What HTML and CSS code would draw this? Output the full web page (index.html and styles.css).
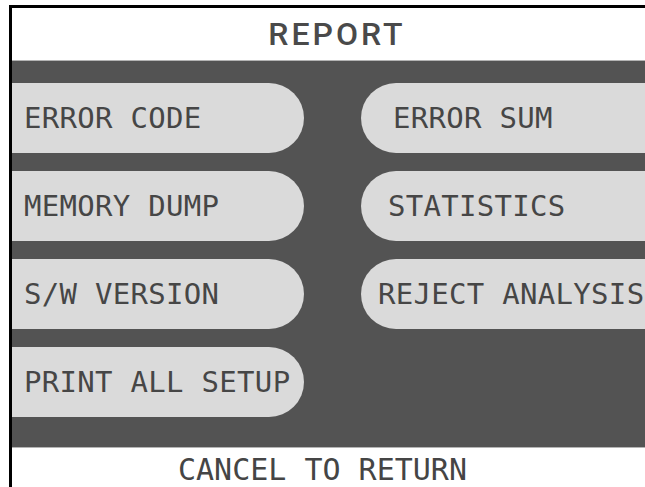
FILE: index.html
```html
<!DOCTYPE html>
<html lang="en">
<head>
  <meta charset="UTF-8">
  <meta name="viewport" content="width=device-width, initial-scale=1.0">
  <title>Report</title>
  <link rel="stylesheet" href="styles.css">
</head>
<body>

<div id="screen">
  <h1 class="titulo">REPORT</h1>

  <div class="painel">
    <div class="botao esq">ERROR CODE</div>
    <div class="botao dir recuo-grande">ERROR SUM</div>

    <div class="botao esq">MEMORY DUMP</div>
    <div class="botao dir recuo-medio">STATISTICS</div>

    <div class="botao esq">S/W VERSION</div>
    <div class="botao dir">REJECT ANALYSIS</div>

    <div class="botao esq">PRINT ALL SETUP</div>
  </div>

  <footer class="rodape">CANCEL TO RETURN</footer>
</div>

</body>
</html>
```

FILE: styles.css
```css
body {
    margin: 0;
    background-color: white;
    overflow: hidden;
}

#screen {
    margin-left: 9px;
    margin-top: 5px;
    border-left: 3px solid black;
    border-top: 3px solid black;
    height: 482px;
    overflow: hidden;
}

.titulo {
    margin: 0;
    height: 52px;
    line-height: 52px;
    border-bottom: 1px solid #b4b4b4;
    text-align: center;
    font-family: Roboto, sans-serif;
    font-weight: 500;
    font-size: 32px;
    letter-spacing: 3px;
    padding-left: 17px;
    color: #4a4a4a;
}

.painel {
    background-color: #535353;
    height: 364px;
    padding-top: 22px;
    display: grid;
    grid-template-columns: 292px 1fr;
    grid-auto-rows: 70px;
    column-gap: 57px;
    row-gap: 18px;
    align-content: start;
}

.botao {
    background-color: #dadada;
    color: #464646;
    font-family: 'DejaVu Sans Mono', monospace;
    font-size: 29px;
    letter-spacing: 0.3px;
    line-height: 70px;
    white-space: nowrap;
    overflow: hidden;
}

.esq {
    padding-left: 12px;
    border-radius: 0 35px 35px 0;
}

.dir {
    padding-left: 17px;
    border-radius: 35px 0 0 35px;
}

.recuo-grande {
    padding-left: 32px;
}

.recuo-medio {
    padding-left: 27px;
}

.rodape {
    border-top: 1px solid #b4b4b4;
    height: 39px;
    line-height: 44px;
    text-align: center;
    padding-right: 12px;
    font-family: 'DejaVu Sans Mono', monospace;
    font-size: 30px;
    color: #454545;
}
```
